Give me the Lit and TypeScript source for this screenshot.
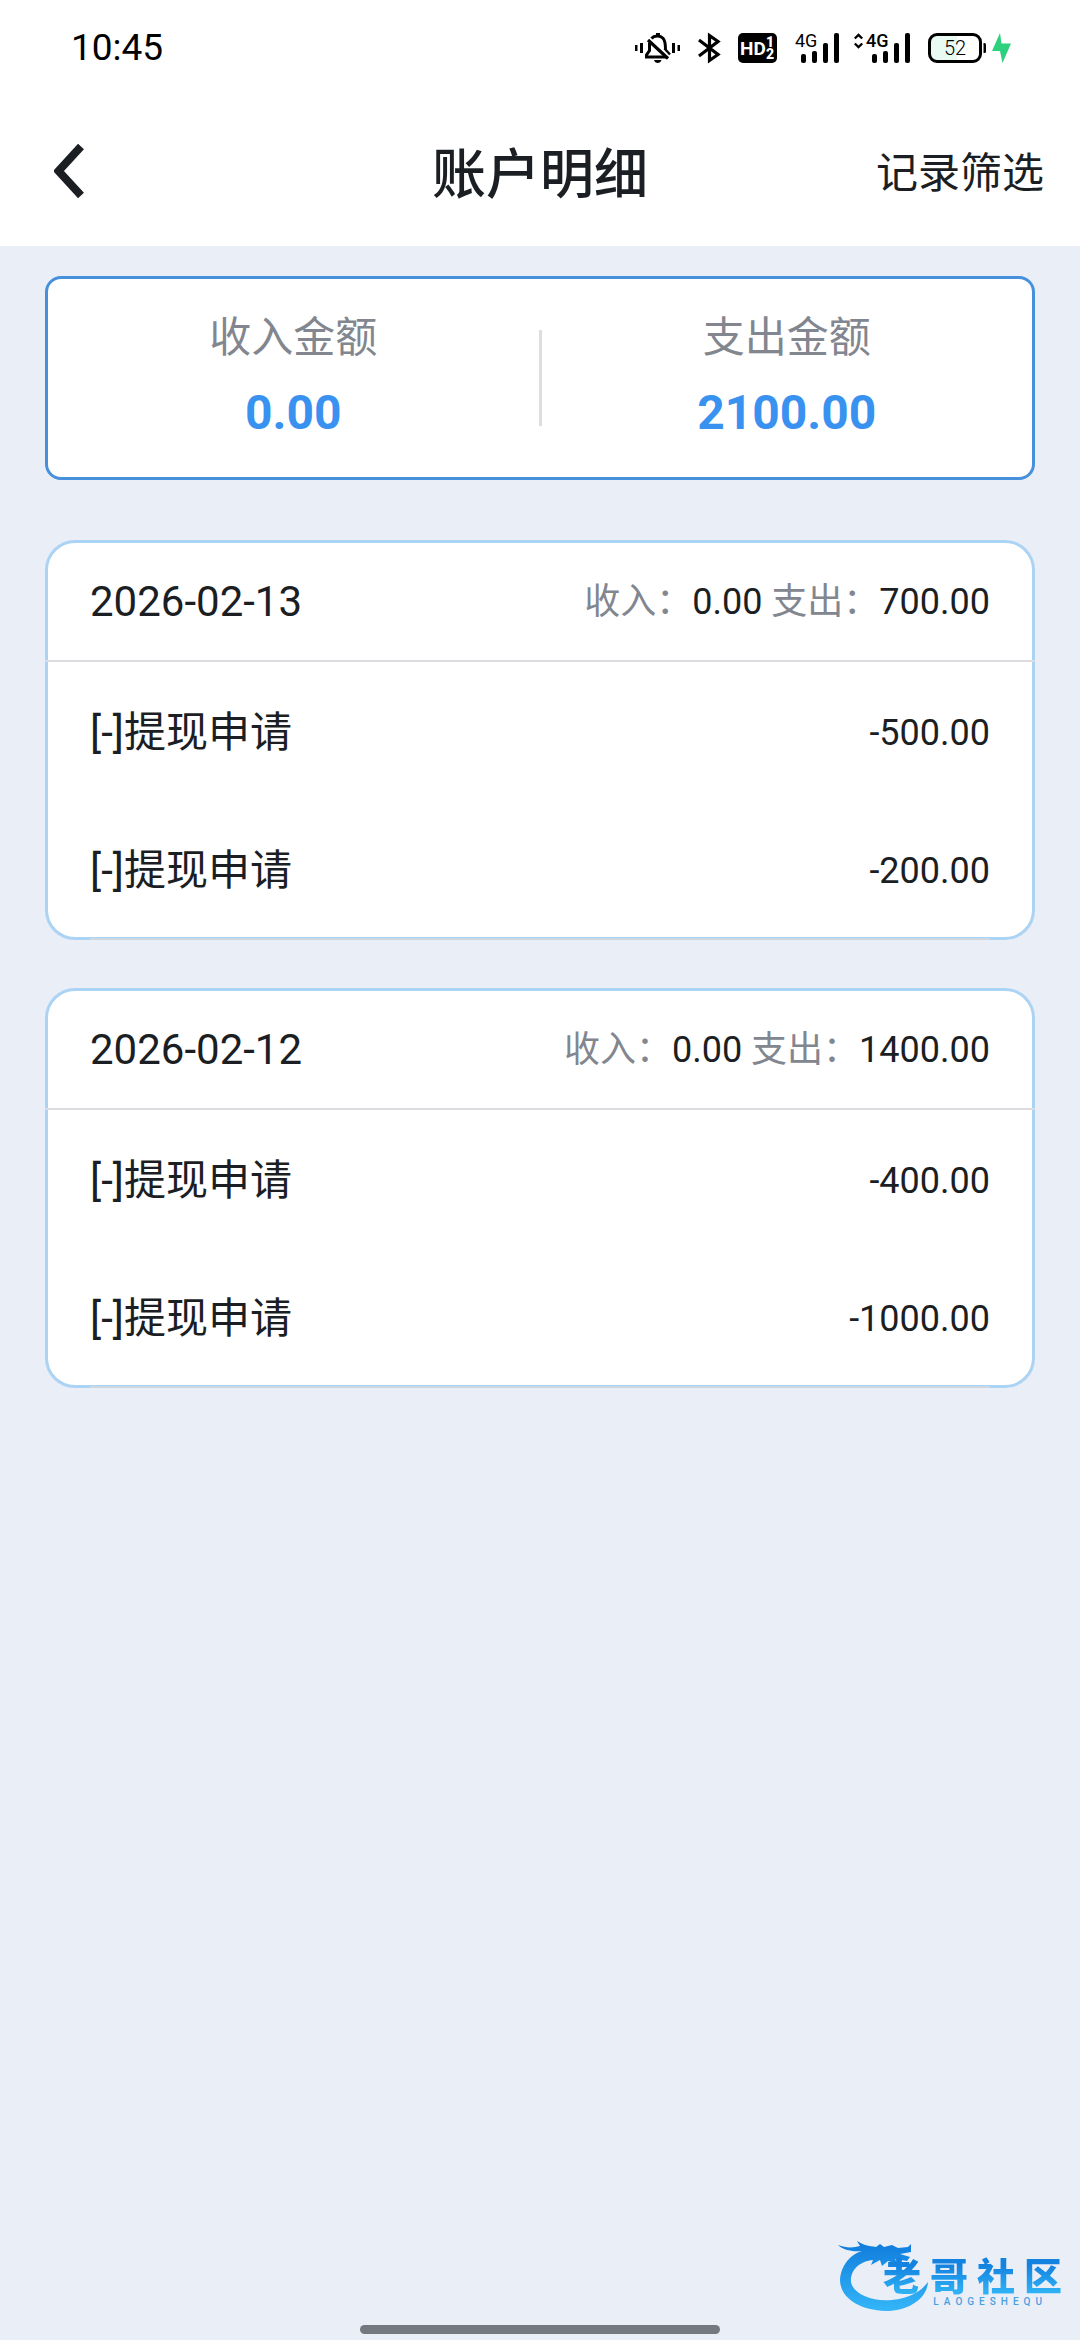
import { LitElement, html, css } from "lit";
import { customElement, property } from "lit/decorators.js";

interface Entry {
  title: string;
  amount: string;
}

interface Day {
  date: string;
  income: string;
  expense: string;
  entries: Entry[];
}

const DAYS: Day[] = [
  {
    date: "2026-02-13",
    income: "0.00",
    expense: "700.00",
    entries: [
      { title: "[-]提现申请", amount: "-500.00" },
      { title: "[-]提现申请", amount: "-200.00" },
    ],
  },
  {
    date: "2026-02-12",
    income: "0.00",
    expense: "1400.00",
    entries: [
      { title: "[-]提现申请", amount: "-400.00" },
      { title: "[-]提现申请", amount: "-1000.00" },
    ],
  },
];

@customElement("status-bar")
export class StatusBar extends LitElement {
  static styles = css`
    :host {
      display: flex;
      align-items: center;
      justify-content: space-between;
      height: 96px;
      padding: 0 69px 0 71px;
      background: #fff;
      color: #000;
    }
    .time {
      font-size: 37px;
      line-height: 44px;
    }
    .icons {
      display: flex;
      align-items: center;
    }
    svg {
      display: block;
      height: 30px;
      overflow: visible;
    }
    .bell { width: 45px; margin-right: 18px; }
    .bluetooth { width: 22px; margin-right: 18px; }
    .hd { width: 39px; margin-right: 18px; }
    .signal { width: 44px; margin-right: 15px; }
    .signal-data { width: 56px; margin-right: 18px; }
    .battery { width: 58px; margin-right: 6px; }
    .bolt { width: 19px; }
    .hd-text { font-size: 19px; font-weight: 700; }
    .hd-sim { font-size: 14px; font-weight: 900; }
    .net { font-size: 18px; }
    .net-strong { font-size: 18px; font-weight: 500; }
    .level { font-size: 20px; font-weight: 300; }
  `;

  render() {
    return html`
      <span class="time">10:45</span>
      <div class="icons">
        <svg class="bell" viewBox="0 0 45 30" aria-hidden="true">
          <path d="M0 12h2.500v6h-2.500zM5 10h3v10h-3zM37 10h3v10h-3zM42.500 12h2.500v6h-2.500z" />
          <path d="M21 0h4v3h-4z" />
          <path
            d="M16.500 5.500C19 2.600 25 2 28 5.200C30 7.300 30.500 9.500 30.500 16.500M14.500 9.500V17.500L11.500 22V24H31"
            fill="none" stroke="#000" stroke-width="3" />
          <path d="M13 7L33 25.500" stroke="#000" stroke-width="3.200" fill="none" />
          <path d="M29.500 15.500l5.500 6" stroke="#000" stroke-width="2.400" fill="none" />
          <path d="M19 27h7.500c-1 4-6.500 4-7.500 0z" />
        </svg>
        <svg class="bluetooth" viewBox="0 0 22 30" aria-hidden="true">
          <path d="M1 7L20 21.500L11.500 27.500V2.500L20 8.500L1 23" fill="none" stroke="#000" stroke-width="3.200" />
        </svg>
        <svg class="hd" viewBox="0 0 39 30" aria-hidden="true">
          <rect width="39" height="30" rx="5" />
          <text class="hd-text" x="2" y="22" fill="#fff">HD</text>
          <text class="hd-sim" x="28" y="14" fill="#fff">1</text>
          <text class="hd-sim" x="28" y="26" fill="#fff">2</text>
        </svg>
        <svg class="signal" viewBox="0 0 44 30" aria-hidden="true">
          <text class="net" x="0" y="14">4G</text>
          <rect x="6" y="21" width="5" height="9" rx="2" />
          <rect x="17" y="18" width="5" height="12" rx="2" />
          <rect x="28" y="10" width="5" height="20" rx="2" />
          <rect x="39" y="0" width="5" height="30" rx="2" />
        </svg>
        <svg class="signal-data" viewBox="0 0 56 30" aria-hidden="true">
          <path d="M0.800 5.500L4.500 2L8.200 5.500M0.800 10.500L4.500 14L8.200 10.500" fill="none" stroke="#000" stroke-width="2.400" />
          <text class="net-strong" x="12" y="14">4G</text>
          <rect x="18" y="21" width="5" height="9" rx="2" />
          <rect x="29" y="18" width="5" height="12" rx="2" />
          <rect x="40" y="10" width="5" height="20" rx="2" />
          <rect x="51" y="0" width="5" height="30" rx="2" />
        </svg>
        <svg class="battery" viewBox="0 0 58 30" aria-hidden="true">
          <rect x="1.500" y="1.500" width="51" height="27" rx="7.500" fill="#fff" />
          <path d="M9 1.500H29V28.500H9A7.500 7.500 0 0 1 1.500 21V9A7.500 7.500 0 0 1 9 1.500z" fill="#e9faf3" />
          <rect x="1.500" y="1.500" width="51" height="27" rx="7.500" fill="none" stroke="#000" stroke-width="3" />
          <path d="M55.500 10h1q1.500 0 1.500 1.500v7q0 1.500-1.500 1.500h-1z" />
          <text class="level" x="27" y="22" text-anchor="middle">52</text>
        </svg>
        <svg class="bolt" viewBox="0 0 19 30" aria-hidden="true">
          <path d="M8 0L0 18H8L10.500 30L19 10.500H9.500z" fill="#2dd07c" />
        </svg>
      </div>
    `;
  }
}

@customElement("nav-bar")
export class NavBar extends LitElement {
  static styles = css`
    :host {
      display: grid;
      grid-template-columns: 1fr auto 1fr;
      align-items: center;
      height: 150px;
      padding: 0 36px;
      background: #fff;
      color: #1b1e23;
    }
    button {
      border: 0;
      background: none;
      padding: 0;
      font: inherit;
      color: inherit;
    }
    .back {
      justify-self: start;
      padding: 16px 18px;
    }
    .back svg {
      display: block;
      width: 30px;
      height: 56px;
    }
    .title {
      margin: 0;
      padding-top: 10px;
      font-size: 54px;
      line-height: 72px;
      font-weight: 500;
    }
    .filter {
      justify-self: end;
      padding-top: 6px;
      font-size: 42px;
      line-height: 60px;
    }
  `;

  render() {
    return html`
      <button class="back" aria-label="返回">
        <svg viewBox="0 0 30 56" aria-hidden="true">
          <path d="M27 3.500L4.500 28L27 52.500" fill="none" stroke="#1b1e23" stroke-width="8" />
        </svg>
      </button>
      <h1 class="title">账户明细</h1>
      <button class="filter">记录筛选</button>
    `;
  }
}

@customElement("summary-card")
export class SummaryCard extends LitElement {
  static styles = css`
    :host {
      display: flex;
      align-items: center;
      height: 198px;
      border: 3px solid #4690dc;
      border-radius: 16px;
      background: #fff;
    }
    .item {
      flex: 1;
      display: flex;
      flex-direction: column;
      align-items: center;
      gap: 15px;
      padding-bottom: 6px;
    }
    .rule {
      width: 3px;
      height: 96px;
      background: #dcdee2;
    }
    .label {
      font-size: 42px;
      line-height: 60px;
      color: #82868f;
    }
    .value {
      font-size: 48px;
      line-height: 60px;
      font-weight: 700;
      color: #3a92f0;
    }
  `;

  @property() income = "";
  @property() expense = "";

  render() {
    return html`
      <div class="item">
        <span class="label">收入金额</span>
        <span class="value">${this.income}</span>
      </div>
      <div class="rule"></div>
      <div class="item">
        <span class="label">支出金额</span>
        <span class="value">${this.expense}</span>
      </div>
    `;
  }
}

@customElement("day-card")
export class DayCard extends LitElement {
  static styles = css`
    :host {
      display: block;
      border: 3px solid #abd3f4;
      border-radius: 30px;
      background: #fff;
      color: #1b1e23;
    }
    .head {
      display: flex;
      align-items: center;
      justify-content: space-between;
      height: 117px;
      margin: 0 -3px;
      padding: 0 45px;
      border-bottom: 2px solid #dadce0;
    }
    .date {
      margin: 0;
      font-size: 42px;
      line-height: 60px;
      font-weight: 400;
    }
    .totals {
      font-size: 36px;
      line-height: 60px;
    }
    .caption {
      color: #82868f;
    }
    .entries {
      list-style: none;
      margin: 0 42px -3px;
      padding: 0;
    }
    .entry {
      box-sizing: border-box;
      display: flex;
      align-items: center;
      justify-content: space-between;
      height: 138px;
      padding-top: 4px;
    }
    .entry:last-child {
      height: 140px;
      border-bottom: 2px solid #ccd7e2;
    }
    .name {
      font-size: 42px;
      line-height: 60px;
    }
    .amount {
      font-size: 36px;
      line-height: 60px;
    }
  `;

  @property({ attribute: false }) day!: Day;

  render() {
    const { date, income, expense, entries } = this.day;
    return html`
      <header class="head">
        <h2 class="date">${date}</h2>
        <span class="totals"
          ><span class="caption">收入：</span>${income} <span class="caption">支出：</span>${expense}</span
        >
      </header>
      <ul class="entries">
        ${entries.map(
          (entry) => html`<li class="entry">
            <span class="name">${entry.title}</span><span class="amount">${entry.amount}</span>
          </li>`
        )}
      </ul>
    `;
  }
}

@customElement("community-mark")
export class CommunityMark extends LitElement {
  static styles = css`
    :host {
      display: block;
      position: relative;
      width: 224px;
      height: 78px;
    }
    .dragon {
      display: block;
      width: 92px;
      height: 78px;
    }
    .words {
      position: absolute;
      right: 0;
      top: 24px;
      display: flex;
      flex-direction: column;
      align-items: flex-end;
    }
    .name {
      display: flex;
      gap: 9px;
      font-size: 38px;
      line-height: 40px;
      font-weight: 900;
      color: transparent;
      background: linear-gradient(#1482e0 20%, #2fb2f5 90%);
      background-clip: text;
      -webkit-background-clip: text;
    }
    .latin {
      display: flex;
      gap: 5px;
      padding-right: 20px;
      font-size: 10px;
      line-height: 10px;
      font-weight: 500;
      color: #4a9fe0;
    }
  `;

  render() {
    return html`
      <svg class="dragon" viewBox="0 0 92 78" aria-hidden="true">
        <defs>
          <linearGradient id="sea" x1="0" y1="0" x2="0" y2="1">
            <stop offset="0" stop-color="#0f7bdc" />
            <stop offset="1" stop-color="#34b6f8" />
          </linearGradient>
        </defs>
        <path
          fill="url(#sea)"
          d="M0 12C8 15 15 15 22 13L19 8C25 12 31 13 38 14L42 11L46 14L54 12L60 15L70 14L73 11L73 19L62 21L72 24L69 28L57 26L60 31L50 28L44 33L42 27L33 32L35 27C22 28 12 37 13 49C15 61 34 69 54 67C74 65 84 57 90 49C89 66 70 78 48 78C20 77 2 64 2 47C3 32 13 21 24 18C14 19 5 17 0 12z"
        />
      </svg>
      <div class="words">
        <div class="name">${[..."老哥社区"].map((c) => html`<span>${c}</span>`)}</div>
        <div class="latin">${[..."LAOGESHEQU"].map((c) => html`<span>${c}</span>`)}</div>
      </div>
    `;
  }
}

@customElement("app-root")
export class AppRoot extends LitElement {
  static styles = css`
    :host {
      display: flex;
      flex-direction: column;
      min-height: 100vh;
      background: #eaeef7;
      font-family: Roboto, "Noto Sans CJK SC", sans-serif;
    }
    .content {
      flex: 1;
      display: flex;
      flex-direction: column;
      padding: 30px 45px;
    }
    .days {
      display: flex;
      flex-direction: column;
      gap: 48px;
      margin-top: 60px;
    }
    .footer {
      display: flex;
      flex-direction: column;
      align-items: center;
      gap: 14px;
      padding-bottom: 6px;
    }
    .mark {
      align-self: flex-end;
      margin-right: 18px;
    }
    .home {
      width: 360px;
      height: 9px;
      border-radius: 5px;
      background: #75787e;
    }
  `;

  render() {
    return html`
      <status-bar></status-bar>
      <nav-bar></nav-bar>
      <main class="content">
        <summary-card income="0.00" expense="2100.00"></summary-card>
        <div class="days">${DAYS.map((day) => html`<day-card .day=${day}></day-card>`)}</div>
      </main>
      <footer class="footer">
        <community-mark class="mark"></community-mark>
        <div class="home"></div>
      </footer>
    `;
  }
}
